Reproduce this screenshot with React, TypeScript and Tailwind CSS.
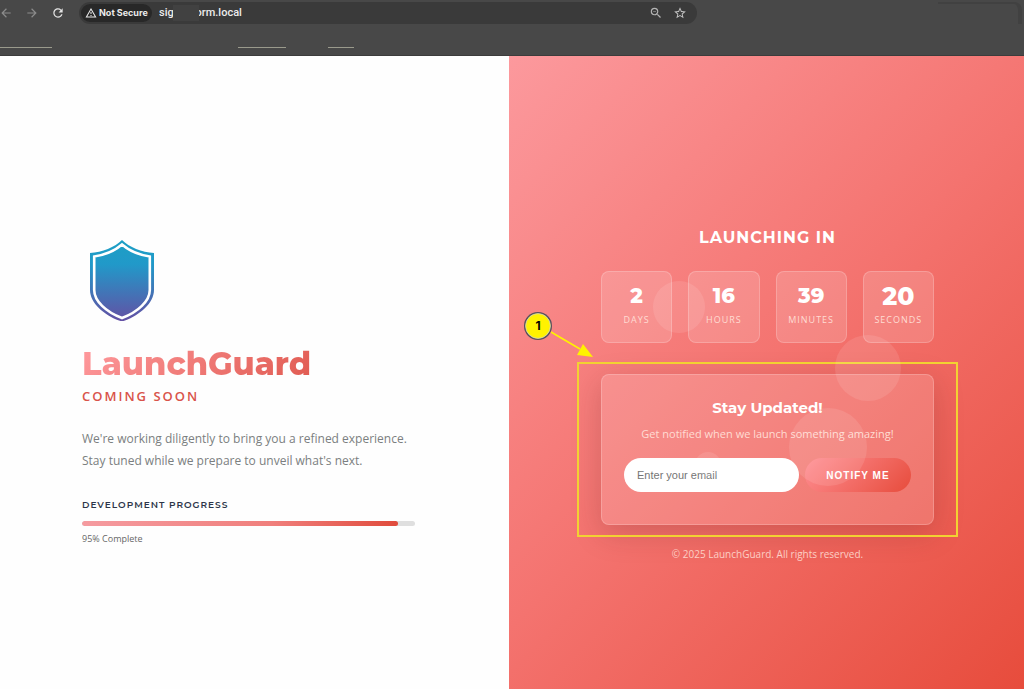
import React from 'react';
import { MdArrowBack, MdArrowForward, MdOutlineWarningAmber, MdRefresh, MdStarBorder, MdZoomOut } from 'react-icons/md';

interface CountdownUnit {
  value: string;
  label: string;
  pulse?: boolean;
}

const countdown: CountdownUnit[] = [
  { value: '2', label: 'Days' },
  { value: '16', label: 'Hours' },
  { value: '39', label: 'Minutes' },
  { value: '20', label: 'Seconds', pulse: true },
];

const progress = 95;

const BrowserBar: React.FC = () => (
  <header className="h-14 bg-[#484848] border-b border-[#3c3c3c] overflow-hidden font-['Roboto',sans-serif]">
    <div className="flex items-start pt-0.5">
      <div className="flex items-center gap-3 w-[79px] h-[22px] shrink-0">
        <button aria-label="Back" className="text-[#8c8c8c] -ml-px">
          <MdArrowBack size={14} />
        </button>
        <button aria-label="Forward" className="text-[#8c8c8c]">
          <MdArrowForward size={14} />
        </button>
        <button aria-label="Reload" className="text-[#e4e4e4]">
          <MdRefresh size={14} stroke="currentColor" />
        </button>
      </div>
      <div className="flex items-center w-[618px] h-[22px] rounded-full bg-[#3a3a3a] px-0.5">
        <button className="flex items-center gap-0.5 h-[18px] w-[71px] shrink-0 rounded-full bg-[#282828] pl-1 text-[#ececec] text-[9px] font-bold whitespace-nowrap font-['Inter',sans-serif]">
          <MdOutlineWarningAmber size={12} />
          Not Secure
        </button>
        <div className="relative flex-1 ml-[7px]">
          <input
            aria-label="Address"
            defaultValue="sig        orm.local"
            className="block w-full bg-transparent text-[#ececec] text-[11px] leading-4 font-medium outline-none"
          />
          <span className="absolute left-[14px] top-0 w-[26px] h-4 bg-[#414141]" />
        </div>
        <button aria-label="Zoom out" className="text-[#b4b4b4] mr-[10px]">
          <MdZoomOut size={14} stroke="currentColor" />
        </button>
        <button aria-label="Bookmark" className="text-[#c4c4c4] mr-2">
          <MdStarBorder size={14} stroke="currentColor" />
        </button>
      </div>
      <div className="ml-auto mr-0.5 w-[84px] h-[22px] rounded-tr-lg border-t-2 border-r-4 border-[#414141]" />
    </div>
    <div className="flex mt-[23px]">
      <span className="h-px w-[52px] bg-[#9a9a8c]" />
      <span className="h-px w-12 ml-[186px] bg-[#9a9a8c]" />
      <span className="h-px w-[26px] ml-[42px] bg-[#9a9a8c]" />
    </div>
  </header>
);

const ShieldLogo: React.FC = () => (
  <svg width="80" height="82" viewBox="0 0 80 82" role="img" aria-label="LaunchGuard">
    <defs>
      <linearGradient id="shield" x1="0" y1="0" x2="0" y2="1">
        <stop offset="0" stopColor="#1c9fc4" />
        <stop offset="0.3" stopColor="#2199c9" />
        <stop offset="1" stopColor="#6350a4" />
      </linearGradient>
    </defs>
    <path d="M40 0C33 7 20 12.5 8 13V50C8 63 22 75 37 80.5Q40 81.5 43 80.5C58 75 72 63 72 50V13C60 12.5 47 7 40 0Z" fill="url(#shield)" />
    <path
      d="M40 4.5C32 11.5 22 15 12.2 16.5V50C12.2 61 24 72 40 78C56 72 67.8 61 67.8 50V16.5C58 15 48 11.5 40 4.5Z"
      fill="none"
      stroke="#fff"
      strokeWidth="2.6"
    />
  </svg>
);

const BrandPanel: React.FC = () => (
  <section className="bg-[#fefefe] pt-[184px] pl-[82px] pr-8">
    <div className="max-w-[333px]">
      <ShieldLogo />
      <h1 className="w-fit mt-[22px] text-[32px] leading-[40px] font-extrabold bg-linear-[135deg,#ff9a9e,#e05a50] bg-clip-text text-transparent font-['Montserrat','Inter',sans-serif]">
        LaunchGuard
      </h1>
      <p className="mt-[2px] text-[13px] leading-5 font-semibold tracking-[2px] uppercase text-[#d9534a]">Coming Soon</p>
      <p className="mt-[22px] text-[12px] leading-[22px] text-[#7b7f80] whitespace-nowrap">
        We're working diligently to bring you a refined experience.
        <br />
        Stay tuned while we prepare to unveil what's next.
      </p>
      <h2 className="mt-[25px] text-[9px] leading-4 font-semibold tracking-[1px] uppercase text-[#2c3548] font-['Montserrat','Inter',sans-serif]">
        Development Progress
      </h2>
      <div role="progressbar" aria-label="Development progress" aria-valuenow={progress} className="mt-2 h-[5px] rounded-full bg-[#dfdfdf] overflow-hidden">
        <div className="h-full rounded-full bg-linear-[90deg,#f59ba0,#f07f7c_60%,#e04b3c]" style={{ width: `${progress}%` }} />
      </div>
      <p className="mt-[5px] text-[9px] leading-4 text-[#666]">{progress}% Complete</p>
    </div>
  </section>
);

// Numbered marker with an arrow and a frame round the signup card
const Callout: React.FC = () => (
  <div className="absolute -inset-x-[24px] -inset-y-[12px] border-2 border-[#f2d132] pointer-events-none">
    <svg className="absolute -left-[58px] -top-[54px]" width="76" height="52" viewBox="0 0 76 52">
      <path d="M30 22L59 39" stroke="#fff200" strokeWidth="1.6" />
      <path d="M72 47L56 45L62 34Z" fill="#fff200" />
      <circle cx="17" cy="16" r="14" fill="#55505a" />
      <circle cx="17" cy="16" r="12.4" fill="#fff200" stroke="#d8d8c0" strokeWidth="0.8" />
    </svg>
    <span className="absolute -left-[55px] -top-[52px] w-7 h-7 text-center text-[12px] leading-7 font-bold text-black font-['Inter',sans-serif]">
      1
    </span>
  </div>
);

const SignupCard: React.FC = () => (
  <form
    className="h-[151px] rounded-lg border border-white/20 bg-white/15 px-[22px] pt-[21px] text-center shadow-[0_8px_30px_rgba(90,30,30,0.22)]"
    onSubmit={(e) => e.preventDefault()}
  >
    <h3 className="text-[15px] leading-6 font-bold text-white font-['Montserrat','Inter',sans-serif]">Stay Updated!</h3>
    <p className="mt-1 text-[11px] leading-5 text-[#ffdcd3]">Get notified when we launch something amazing!</p>
    <div className="flex gap-[6px] mt-[14px]">
      <input
        type="email"
        aria-label="Email"
        placeholder="Enter your email"
        className="flex-1 min-w-0 h-[34px] rounded-full bg-white px-[13px] text-[11px] text-[#444] placeholder:text-[#757575] outline-none font-['Liberation_Sans',sans-serif]"
      />
      <button
        type="submit"
        className="w-[106px] h-[34px] rounded-full bg-linear-[135deg,#ff8f93,#e74c3c] text-white text-[10px] font-bold tracking-[1px] uppercase font-['Liberation_Sans',sans-serif]"
      >
        Notify me
      </button>
    </div>
  </form>
);

const LaunchPanel: React.FC = () => (
  <section className="bg-linear-[135deg,#fc999d,#f4736f_50%,#e74c3c] pt-[170px] pl-[34px] pr-8">
    <div className="relative max-w-[333px] mx-auto">
      <h2 className="text-center text-[16px] leading-6 font-bold tracking-[1px] uppercase text-white font-['Montserrat','Inter',sans-serif]">
        Launching In
      </h2>
      <div className="grid grid-cols-4 gap-4 mt-[21px]">
        {countdown.map((unit) => (
          <div key={unit.label} className="h-[72px] rounded-lg border border-white/20 bg-white/15 pt-3 text-center">
            <div
              className={`leading-6 font-extrabold text-white font-['Montserrat','Inter',sans-serif] ${
                unit.pulse ? 'text-[25px]' : 'text-[21px]'
              }`}
            >
              {unit.value}
            </div>
            <div className="mt-1 text-[9px] leading-4 tracking-[1px] uppercase text-[#ffdcd3]">{unit.label}</div>
          </div>
        ))}
      </div>
      <div className="relative mt-[31px]">
        <SignupCard />
        <Callout />
      </div>
      <p className="mt-[21px] text-center text-[10px] leading-4 text-[#ffd2c8]">© 2025 LaunchGuard. All rights reserved.</p>
      <div className="absolute inset-0 pointer-events-none">
        <span className="absolute left-[52px] top-[55px] size-[52px] rounded-full bg-white/10" />
        <span className="absolute left-[234px] top-[109px] size-[66px] rounded-full bg-white/10" />
        <span className="absolute left-[188px] top-[182px] size-[78px] rounded-full bg-white/10" />
        <span className="absolute left-[94px] top-[226px] size-[26px] rounded-full bg-white/10" />
      </div>
    </div>
  </section>
);

const App: React.FC = () => (
  <div className="min-h-screen flex flex-col font-['Open_Sans',sans-serif]">
    <BrowserBar />
    <main className="flex-1 grid grid-cols-[509fr_515fr]">
      <BrandPanel />
      <LaunchPanel />
    </main>
  </div>
);

export default App;
